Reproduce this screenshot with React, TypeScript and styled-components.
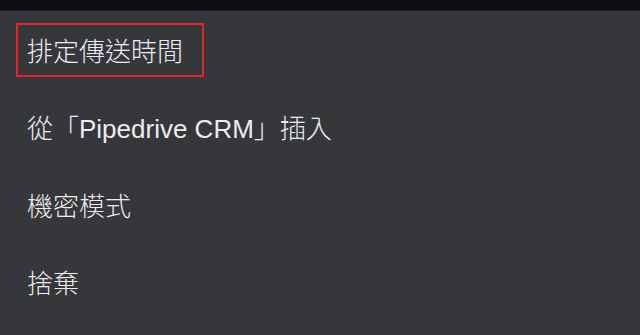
import React from "react";
import styled, { createGlobalStyle } from "styled-components";

const Global = createGlobalStyle`
  html, body { margin: 0; padding: 0; background: #36373b; }
  body { width: 640px; height: 335px; overflow: hidden; }
`;

const Screen = styled.div`
  width: 640px;
  height: 335px;
  background: #36373b;
  display: flex;
  flex-direction: column;
  font-family: "Liberation Sans", "Noto Sans CJK TC", sans-serif;
  color: #ececee;
`;

const TopBar = styled.div`
  height: 10px;
  background: #0e0e10;
  border-bottom: 1px solid #1e1f22;
  flex-shrink: 0;
`;

const Menu = styled.div`
  display: flex;
  flex-direction: column;
`;

const Item = styled.div`
  height: 77.5px;
  display: flex;
  align-items: center;
  padding-left: 27px;
  box-sizing: border-box;
`;

const Label = styled.span<{ $highlight?: boolean }>`
  font-size: 26px;
  font-weight: 300;
  line-height: 1;
  padding: 16px 21px 12px 11px;
  margin-left: -11px;
  outline: ${(p) => (p.$highlight ? "2px solid #e2262b" : "none")};
  outline-offset: -2px;
`;

const items = [
  { text: "排定傳送時間", highlight: true },
  { text: "從「Pipedrive CRM」插入" },
  { text: "機密模式" },
  { text: "捨棄" },
];

export default function App() {
  return (
    <>
      <Global />
      <Screen>
        <TopBar />
        <Menu>
          {items.map((it) => (
            <Item key={it.text}>
              <Label $highlight={it.highlight}>{it.text}</Label>
            </Item>
          ))}
        </Menu>
      </Screen>
    </>
  );
}
